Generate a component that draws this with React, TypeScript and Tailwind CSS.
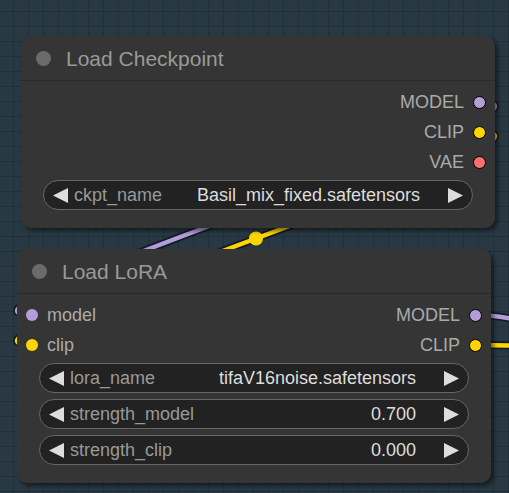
import React from "react";

const MODEL = "#b39ddb";
const CLIP = "#ffd500";
const VAE = "#ff6e6e";

// litegraph style spline between an output (right) and an input (left)
function spline(ax: number, ay: number, bx: number, by: number) {
  const d = Math.hypot(bx - ax, by - ay) * 0.25;
  return `M${ax} ${ay} C${ax + d} ${ay} ${bx - d} ${by} ${bx} ${by}`;
}

function Link({ d, color }: { d: string; color: string }) {
  return (
    <g>
      <path d={d} fill="none" stroke="rgba(0,0,0,0.5)" strokeWidth={8} />
      <path d={d} fill="none" stroke={color} strokeWidth={4.5} />
    </g>
  );
}

function Arrow({ dir }: { dir: "l" | "r" }) {
  return (
    <svg width="15" height="15" viewBox="0 0 15 15" className="shrink-0">
      <polygon points={dir === "l" ? "15,0 0,7.5 15,15" : "0,0 15,7.5 0,15"} fill="#dddddd" />
    </svg>
  );
}

function Widget({ label, value }: { label: string; value: string }) {
  return (
    <div className="flex h-[30px] items-center rounded-full border border-[#666] bg-[#222] pl-[9px] pr-[9px] text-[18px] leading-none">
      <Arrow dir="l" />
      <span className="ml-[6px] flex-1 text-[#999]">{label}</span>
      <span className="mr-[28px] text-[#ddd]">{value}</span>
      <Arrow dir="r" />
    </div>
  );
}

function Dot({ color, ring }: { color: string; ring?: boolean }) {
  return ring ? (
    <span className="block h-[13px] w-[13px] shrink-0 rounded-full border-[1.5px] border-black" style={{ background: color }} />
  ) : (
    <span className="block h-[12px] w-[12px] shrink-0 rounded-full" style={{ background: color }} />
  );
}

function Out({ label, color }: { label: string; color: string }) {
  return (
    <div className="flex items-center gap-[9px]">
      <span className="text-[#aaa]">{label}</span>
      <Dot color={color} ring />
    </div>
  );
}

function In({ label, color }: { label: string; color: string }) {
  return (
    <div className="flex items-center gap-[9px]">
      <Dot color={color} />
      <span className="text-[#aaa]">{label}</span>
    </div>
  );
}

function Title({ text }: { text: string }) {
  return (
    <div className="flex h-[45px] items-center border-b border-[#2a2a2a] pl-[15px]">
      <span className="block h-[15px] w-[15px] rounded-full bg-[#6b6b6b]" />
      <span className="ml-[15px] text-[21px] leading-none text-[#999]">{text}</span>
    </div>
  );
}

export default function App() {
  return (
    <div className="relative h-[493px] w-[509px] overflow-hidden bg-[#293944] bg-[linear-gradient(to_right,rgba(0,0,0,0.16)_1px,transparent_1px),linear-gradient(to_bottom,rgba(0,0,0,0.16)_1px,transparent_1px)] bg-[size:15px_15px] bg-[position:-2px_-4px] font-['Liberation_Sans',Arial,sans-serif]">
      <svg className="absolute inset-0" width="509" height="493">
        <Link d={spline(480, 102, 32, 315)} color={MODEL} />
        <Link d={spline(480, 132, 32, 345)} color={CLIP} />
        <Link d={spline(475, 315, 900, 440)} color={MODEL} />
        <Link d={spline(475, 345, 900, 350)} color={CLIP} />
        <circle cx={256} cy={238.5} r={7} fill={CLIP} />
      </svg>

      {/* Load Checkpoint */}
      <div className="absolute left-[21px] top-[36px] w-[474px] rounded-[10px] bg-[#353535] shadow-[3px_3px_4px_rgba(0,0,0,0.5)]">
        <Title text="Load Checkpoint" />
        <div className="flex flex-col px-[22px] pb-[18px] pt-[6px] text-[18px] leading-none">
          <div className="-mr-[13px] flex flex-col items-end">
            <div className="flex h-[30px] items-center"><Out label="MODEL" color={MODEL} /></div>
            <div className="flex h-[30px] items-center"><Out label="CLIP" color={CLIP} /></div>
            <div className="flex h-[30px] items-center"><Out label="VAE" color={VAE} /></div>
          </div>
          <div className="mt-[3px]">
            <Widget label="ckpt_name" value="Basil_mix_fixed.safetensors" />
          </div>
        </div>
      </div>

      {/* Load LoRA */}
      <div className="absolute left-[17px] top-[249px] w-[474px] rounded-[10px] bg-[#353535] shadow-[3px_3px_4px_rgba(0,0,0,0.5)]">
        <Title text="Load LoRA" />
        <div className="flex flex-col px-[22px] pb-[18px] pt-[6px] text-[18px] leading-none">
          <div className="-ml-[13px] -mr-[13px]">
            <div className="flex h-[30px] items-center justify-between">
              <In label="model" color={MODEL} />
              <Out label="MODEL" color={MODEL} />
            </div>
            <div className="flex h-[30px] items-center justify-between">
              <In label="clip" color={CLIP} />
              <Out label="CLIP" color={CLIP} />
            </div>
          </div>
          <div className="mt-[3px] flex flex-col gap-[6px]">
            <Widget label="lora_name" value="tifaV16noise.safetensors" />
            <Widget label="strength_model" value="0.700" />
            <Widget label="strength_clip" value="0.000" />
          </div>
        </div>
      </div>
    </div>
  );
}
